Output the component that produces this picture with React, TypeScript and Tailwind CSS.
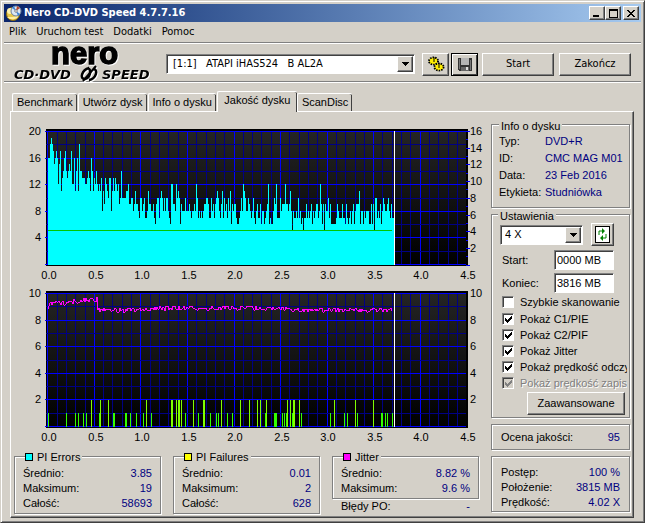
import React from "react";

const raised =
	"border border-white border-r-[#404040] border-b-[#404040] bg-[#d4d0c8] shadow-[inset_-1px_-1px_0_#808080]";
const sunken =
	"border border-[#808080] border-r-white border-b-white bg-white shadow-[inset_1px_1px_0_#404040]";
const groupBorder =
	"border border-[#808080] shadow-[1px_1px_0_#fff,inset_1px_1px_0_#fff]";

const pieErrors: number[] = [
	16, 16, 18, 19, 18, 17, 15, 16, 17, 16, 12, 15, 17, 11, 13, 14, 16, 17, 14, 13,
	14, 15, 14, 17, 12, 12, 16, 11, 14, 16, 11, 18, 14, 14, 13, 13, 13, 12, 12, 13,
	14, 13, 11, 16, 14, 11, 13, 12, 14, 12, 11, 12, 11, 13, 8, 11, 9, 13, 12, 11,
	10, 13, 13, 8, 11, 13, 11, 13, 12, 11, 12, 9, 10, 14, 10, 10, 10, 10, 11, 11,
	12, 9, 9, 10, 10, 8, 9, 11, 9, 9, 8, 7, 10, 10, 8, 9, 10, 7, 7, 8,
	11, 9, 9, 8, 8, 9, 7, 6, 9, 10, 10, 7, 10, 11, 10, 8, 10, 8, 10, 10,
	8, 7, 6, 12, 12, 9, 9, 8, 12, 10, 11, 10, 6, 9, 8, 8, 8, 10, 8, 8,
	8, 9, 8, 7, 8, 8, 9, 8, 12, 10, 7, 8, 7, 8, 7, 8, 9, 9, 10, 10,
	9, 7, 7, 10, 8, 9, 7, 9, 10, 11, 10, 8, 7, 9, 11, 7, 10, 8, 9, 7,
	10, 8, 11, 6, 9, 8, 9, 9, 7, 6, 6, 7, 8, 10, 8, 12, 11, 10, 8, 8,
	10, 9, 8, 7, 8, 10, 7, 6, 8, 9, 7, 7, 9, 6, 8, 8, 6, 7, 8, 9,
	12, 6, 7, 6, 6, 8, 10, 9, 12, 7, 7, 7, 10, 8, 9, 9, 9, 12, 9, 9,
	8, 9, 11, 8, 5, 8, 7, 7, 8, 7, 10, 7, 8, 6, 7, 5, 7, 7, 9, 7,
	8, 7, 8, 9, 6, 8, 7, 8, 9, 9, 7, 8, 12, 9, 6, 9, 5, 9, 8, 8,
	10, 7, 9, 6, 6, 6, 6, 6, 7, 9, 8, 7, 7, 7, 9, 7, 7, 6, 9, 7,
	6, 7, 8, 6, 8, 9, 6, 8, 9, 9, 9, 11, 6, 8, 8, 6, 8, 7, 8, 8,
	8, 6, 6, 9, 6, 9, 5, 10, 10, 7, 8, 7, 9, 6, 8, 10, 9, 8, 8, 9,
	10, 8, 7, 9, 7, 7,
];

// sample positions with one and with two failures
const pifOnes: number[] = [
	0, 18, 27, 30, 35, 38, 51, 65, 66, 77, 78, 82, 88, 95, 103, 137, 150, 162, 168,
	170, 179, 184, 217, 226, 227, 228, 234, 236, 238, 244, 253, 282, 296, 299, 309,
	333, 334, 337, 339, 344,
];
const pifTwos: number[] = [
	43, 52, 60, 98, 123, 124, 128, 130, 131, 133, 145, 155, 156, 173, 192, 201, 209,
	212, 218, 239, 242, 245, 246, 251, 286, 307, 325,
];

const jitterPoints = (): string => {
	let seed = 7;
	const points: string[] = [];
	for (let i = 0; i < 345; i++) {
		seed = (seed * 1103 + 12345) % 65536;
		let base = 8.72;
		if (i < 2) base = 8.85;
		else if (i < 50) base = 9.15 + i * 0.008;
		else if (i < 90) base = 8.7;
		else if (i < 130) base = 8.74 + (i - 90) * 0.004;
		else if (i < 240) base = 8.87;
		const value = base + (seed / 65536 - 0.5) * 0.36;
		points.push(`${36 + i},${Math.round(143 - value * 13.3)}`);
	}
	return points.join(" ");
};

interface ChartProps {
	left: string[];
	right: string[];
	rightStep: number;
	label: string;
	id: string;
	children: React.ReactNode;
}

const Chart: React.FC<ChartProps> = ({
	left,
	right,
	rightStep,
	label,
	id,
	children,
}) => (
	<svg
		viewBox="0 0 475 162"
		className="block w-full text-[11px]"
		shapeRendering="crispEdges"
		role="img"
		aria-label={label}>
		<defs>
			<linearGradient id={id} x1="0" y1="0" x2="0" y2="1">
				<stop offset="0" stopColor="#242424" />
				<stop offset="1" stopColor="#000" />
			</linearGradient>
		</defs>
		<rect x="34" y="8" width="422" height="137" fill="#000" />
		<rect x="36" y="11" width="418" height="132" fill={`url(#${id})`} />
		{Array.from({ length: 45 }, (_, i) => (
			<rect
				key={i}
				x={Math.round(35.3 + i * 9.31)}
				y="10"
				width="1"
				height="134"
				fill={i % 5 ? "#000084" : "#0000ff"}
			/>
		))}
		{Array.from({ length: 11 }, (_, i) => (
			<rect
				key={i}
				x={i % 2 ? 34 : 33}
				y={Math.round(10 + i * 13.3)}
				width={i % 2 ? 420 : 421}
				height="1"
				fill={i % 2 ? "#000084" : "#0000ff"}
			/>
		))}
		{children}
		<rect x="382" y="10" width="1" height="134" fill="#fff" />
		{left.map((text, i) => (
			<text key={text} x="29" y={14 + Math.round(i * 26.6)} textAnchor="end">
				{text}
			</text>
		))}
		{right.map((text, i) => (
			<text key={text} x="458" y={14 + Math.round(i * rightStep)}>
				{text}
			</text>
		))}
		{Array.from({ length: 10 }, (_, i) => (
			<text key={i} x={Math.round(37 + i * 46.5)} y="158" textAnchor="middle">
				{(i / 2).toFixed(1)}
			</text>
		))}
	</svg>
);

interface StatsProps {
	title: string;
	swatch: string;
	rows: [string, string][];
}

const Stats: React.FC<StatsProps> = ({ title, swatch, rows }) => (
	<section className={`${groupBorder} px-2 pb-0.5`}>
		<h2 className="-mt-[7px] ml-0.5 flex w-fit items-center gap-1 bg-[#d4d0c8] pr-0.5 leading-[14px]">
			<span className={`size-2 border border-black ${swatch}`} />
			{title}
		</h2>
		<dl className="mt-0.5 leading-[15px]">
			{rows.map(([name, value]) => (
				<div key={name} className="flex justify-between">
					<dt>{name}</dt>
					<dd className="text-[#000080]">{value}</dd>
				</div>
			))}
		</dl>
	</section>
);

const DropArrow: React.FC = () => (
	<span
		className={`${raised} pointer-events-none absolute top-0.5 right-0.5 bottom-0.5 flex w-4 items-center justify-center`}>
		<svg width="7" height="4" viewBox="0 0 7 4" shapeRendering="crispEdges">
			<path d="M0 0h7v1H6v1H5v1H4v1H3V3H2V2H1V1H0z" />
		</svg>
	</span>
);

interface CheckProps {
	text: string;
	checked?: boolean;
	disabled?: boolean;
}

const Check: React.FC<CheckProps> = ({ text, checked, disabled }) => (
	<label
		className={`flex h-4 items-center whitespace-nowrap ${
			disabled ? "text-[#808080] [text-shadow:1px_1px_0_#fff]" : ""
		}`}>
		<span className="relative mr-1.5 size-3 shrink-0">
			<input
				type="checkbox"
				defaultChecked={checked}
				disabled={disabled}
				className={`${sunken} peer block size-3 appearance-none disabled:bg-[#d4d0c8]`}
			/>
			<svg
				viewBox="0 0 12 12"
				shapeRendering="crispEdges"
				className="pointer-events-none absolute inset-0 hidden fill-current peer-checked:block">
				<path d="M3 5h1v1h1v1h1V6h1V5h1V4h1V3h1v3H9v1H8v1H7v1H6v1H5V9H4V8H3z" />
			</svg>
		</span>
		{text}
	</label>
);

const tabs: string[] = [
	"Benchmark",
	"Utwórz dysk",
	"Info o dysku",
	"Jakość dysku",
	"ScanDisc",
];

const App: React.FC = () => {
	return (
		<div className="flex min-h-screen flex-col border border-[#d4d0c8] border-r-[#404040] border-b-[#404040] bg-[#d4d0c8] font-['Liberation_Sans',Arial,sans-serif] text-[11px] text-black shadow-[inset_1px_1px_0_#fff,inset_-1px_-1px_0_#808080]">
			<header className="mx-[3px] mt-[3px] flex h-[18px] items-center bg-linear-to-r from-[#0a246a] to-[#a6caf0] pr-0.5 pl-0.5 font-['DejaVu_Sans_Condensed','DejaVu_Sans',sans-serif]">
				<svg width="16" height="16" viewBox="0 0 16 16" aria-hidden="true">
					<circle cx="7" cy="9" r="6.5" fill="#e8c84c" stroke="#8c6a10" />
					<circle cx="4" cy="6" r="3" fill="#fff3b0" />
					<path d="M1 12q4 4 10 1l2-3-6 2z" fill="#fff0a0" />
					<circle cx="10" cy="6" r="5" fill="#dce8f4" stroke="#6a7f9c" />
					<path d="M10 6 6 3l2-2zM10 6l4 3-2 2z" fill="#3f86d8" />
					<path d="m10 6 1-5 3 2z" fill="#b84830" />
					<circle cx="10" cy="6" r="1.3" fill="#fff" stroke="#444" strokeWidth=".6" />
				</svg>
				<h1 className="ml-0.5 flex-1 font-bold text-white">
					Nero CD-DVD Speed 4.7.7.16
				</h1>
				<button
					aria-label="Minimize"
					className={`${raised} flex h-3.5 w-4 items-end justify-center pb-0.5`}>
					<span className="mr-0.5 h-0.5 w-1.5 bg-black" />
				</button>
				<button
					aria-label="Maximize"
					className={`${raised} flex h-3.5 w-4 items-center justify-center`}>
					<span className="h-[9px] w-[9px] border border-t-2 border-black" />
				</button>
				<button
					aria-label="Close"
					className={`${raised} ml-0.5 flex h-3.5 w-4 items-center justify-center`}>
					<svg width="8" height="7" viewBox="0 0 8 7" shapeRendering="crispEdges">
						<path d="M0 0h2v1h1v1h2V1h1V0h2v1H7v1H6v1H5v1h1v1h1v1h1v1H6V6H5V5H3v1H2v1H0V6h1V5h1V4h1V3H2V2H1V1H0z" />
					</svg>
				</button>
			</header>

			<nav className="mx-[3px] flex h-[21px] items-center gap-2.5 border-b border-[#808080] pl-[5px] font-['DejaVu_Sans_Condensed','DejaVu_Sans',sans-serif] shadow-[0_1px_0_#fff]">
				<button>Plik</button>
				<button>Uruchom test</button>
				<button>Dodatki</button>
				<button>Pomoc</button>
			</nav>

			<div className="mx-[3px] flex h-[39px] items-center border-b border-[#808080] pt-1 pr-2.5 pl-2 font-['DejaVu_Sans_Condensed','DejaVu_Sans',sans-serif] shadow-[0_1px_0_#fff]">
				<svg
					width="148"
					height="36"
					viewBox="0 0 148 36"
					role="img"
					aria-label="nero CD-DVD Speed"
					className="mr-1.5 shrink-0 overflow-visible drop-shadow-[1px_1px_0_#fff]">
					<text
						x="39"
						y="18"
						stroke="#000"
						strokeWidth="1.5"
						className="font-['Liberation_Sans',sans-serif] text-[31px] font-bold">
						nero
					</text>
					<g className="font-['DejaVu_Sans',sans-serif] text-[13px] font-bold italic">
						<text x="2" y="33">
							CD·DVD
						</text>
						<text x="90" y="33">
							SPEED
						</text>
					</g>
					<g fill="none" stroke="#000">
						<path
							d="M77 22c-7 2-10 11-4 11 5-1 7-9 3-11zM81 23c6 0 3 10-4 11"
							strokeWidth="2.5"
						/>
						<path d="m84 20-13 15" strokeWidth="2" />
					</g>
				</svg>
				<div className="relative flex-1">
					<select
						aria-label="Napęd"
						className={`${sunken} block h-5 w-full appearance-none pl-1.5 whitespace-pre`}>
						<option>{"[1:1]\u00a0\u00a0 ATAPI iHAS524\u00a0\u00a0 B AL2A"}</option>
					</select>
					<DropArrow />
				</div>
				<button
					aria-label="Opcje"
					className={`${raised} ml-[7px] flex h-[23px] w-[27px] items-center justify-center`}>
					<svg width="18" height="18" viewBox="0 0 18 18" stroke="#000">
						<ellipse cx="6.500" cy="6" rx="4.500" ry="3.500" fill="#fe0" strokeWidth="2" strokeDasharray="1.500 1" />
						<ellipse cx="12" cy="12" rx="4.500" ry="3.500" fill="#fe0" strokeWidth="2" strokeDasharray="1.500 1" />
						<ellipse cx="6.500" cy="6" rx="3.500" ry="2.500" fill="#fe0" stroke="none" />
						<ellipse cx="12" cy="12" rx="3.500" ry="2.500" fill="#fe0" stroke="none" />
						<path d="M7 2v5M12 8v5" fill="none" />
					</svg>
				</button>
				<button
					aria-label="Zapisz"
					className="ml-0.5 flex h-[23px] w-[27px] items-center justify-center border border-black bg-[#d4d0c8] shadow-[inset_1px_1px_0_#fff,inset_-1px_-1px_0_#404040]">
					<svg width="14" height="13" viewBox="0 0 14 13" shapeRendering="crispEdges">
						<path d="M0 0h14v13H1l-1-1z" fill="#333" />
						<path d="M1 1h1v10H1zM12 2h1v10h-1z" fill="#777" />
						<path d="M3 0h8v7H3z" fill="#b4b4b4" />
						<path d="M3 9h8v4H3z" fill="#666" />
						<path d="M8 9h2v3H8z" fill="#ddd" />
					</svg>
				</button>
				<button className={`${raised} ml-1 h-[23px] w-[72px]`}>Start</button>
				<button className={`${raised} ml-[5px] h-[23px] w-[72px]`}>
					Zakończ
				</button>
			</div>

			<main className="mr-2.5 mb-1 ml-[9px] flex flex-1 flex-col pt-[9px]">
				<div role="tablist" className="flex items-end pl-0.5">
					{tabs.map((tab) => (
						<button
							key={tab}
							role="tab"
							aria-selected={tab === "Jakość dysku"}
							className={
								tab === "Jakość dysku"
									? "relative z-10 -mb-px h-[21px] w-20 rounded-t-xs border-t border-l border-white bg-[#d4d0c8] pb-1 shadow-[inset_-1px_0_0_#404040]"
									: "mr-px h-[18px] rounded-t-xs border-t border-l border-white px-1 shadow-[inset_-1px_0_0_#404040]"
							}>
							{tab}
						</button>
					))}
				</div>

				<div className="flex flex-1 border border-white border-r-[#404040] border-b-[#404040] pl-px shadow-[inset_-1px_-1px_0_#808080]">
					<div className="min-w-0 flex-1 pt-[9px]">
						<Chart
							id="pie"
							label="PI Errors"
							left={["20", "16", "12", "8", "4"]}
							right={["16", "14", "12", "10", "8", "6", "4", "2"]}
							rightStep={16.7}>
							{pieErrors.map((value, i) => (
								<rect
									key={i}
									x={36 + i}
									y={Math.round(143.5 - value * 6.67)}
									width="1"
									height={144 - Math.round(143.5 - value * 6.67)}
									fill="#00ffff"
								/>
							))}
							<rect x="36" y="109" width="344" height="1" fill="#00c800" />
							{Array.from({ length: 17 }, (_, i) => (
								<rect
									key={i}
									x="454"
									y={Math.round(10 + i * 8.35)}
									width={i % 2 ? 2 : 4}
									height="1"
									fill="#0000ff"
								/>
							))}
						</Chart>
						<Chart
							id="pif"
							label="PI Failures / Jitter"
							left={["10", "8", "6", "4", "2"]}
							right={["10", "8", "6", "4", "2"]}
							rightStep={26.6}>
							{pifOnes.map((x) => (
								<rect key={x} x={36 + x} y="130" width="1" height="14" fill="#33ff00" />
							))}
							{pifTwos.map((x) => (
								<rect key={x} x={36 + x} y="117" width="1" height="27" fill="#80ff00" />
							))}
							<polyline points={jitterPoints()} fill="none" stroke="#ff00ff" />
						</Chart>

						<div className="mt-[11px] grid grid-cols-3 items-start gap-3 pr-2 pl-0.5">
							<Stats
								title="PI Errors"
								swatch="bg-[#00ffff]"
								rows={[
									["Średnio:", "3.85"],
									["Maksimum:", "19"],
									["Całość:", "58693"],
								]}
							/>
							<Stats
								title="PI Failures"
								swatch="bg-[#ffff00]"
								rows={[
									["Średnio:", "0.01"],
									["Maksimum:", "2"],
									["Całość:", "628"],
								]}
							/>
							<div>
								<Stats
									title="Jitter"
									swatch="bg-[#ff00ff]"
									rows={[
										["Średnio:", "8.82 %"],
										["Maksimum:", "9.6 %"],
									]}
								/>
								<p className="flex justify-between px-[9px] leading-[15px]">
									<span>Błędy PO:</span>
									<span className="text-[#000080]">-</span>
								</p>
							</div>
						</div>
					</div>

					<aside className="mt-3 mr-[3px] ml-1 flex w-[139px] shrink-0 flex-col gap-1.5">
						<section className={`${groupBorder} pb-1.5 pl-[7px]`}>
							<h2 className="-mt-1.5 w-fit bg-[#d4d0c8] px-0.5 leading-[14px]">
								Info o dysku
							</h2>
							<dl className="grid grid-cols-[46px_1fr] leading-[17px] whitespace-nowrap">
								<dt>Typ:</dt>
								<dd className="text-[#000080]">DVD+R</dd>
								<dt>ID:</dt>
								<dd className="text-[#000080]">CMC MAG M01</dd>
								<dt>Data:</dt>
								<dd className="text-[#000080]">23 Feb 2016</dd>
								<dt>Etykieta:</dt>
								<dd className="text-[#000080]">Studniówka</dd>
							</dl>
						</section>

						<section className={`${groupBorder} pb-0.5`}>
							<h2 className="-mt-1.5 ml-1.5 w-fit bg-[#d4d0c8] px-0.5 leading-[14px]">
								Ustawienia
							</h2>
							<div className="flex items-center gap-2 pl-2">
								<div className="relative w-[83px]">
									<select
										aria-label="Prędkość"
										className={`${sunken} block h-5 w-full appearance-none pl-1`}>
										<option>4 X</option>
									</select>
									<DropArrow />
								</div>
								<button
									aria-label="Odśwież"
									className={`${raised} flex size-[23px] items-center justify-center`}>
									<svg width="15" height="17" viewBox="0 0 15 17" fill="none">
										<rect x=".5" y=".5" width="14" height="16" fill="#fff" stroke="#000" />
										<path d="M4 9V5h3M11 8v4H8" stroke="#008000" />
										<path d="m7 2 3 3-3 3zM8 9l-3 3 3 3z" fill="#008000" />
									</svg>
								</button>
							</div>
							<div className="mt-1 flex flex-col gap-[3px] pr-[15px] pl-2.5">
								<label className="flex items-center justify-between">
									Start:
									<input
										defaultValue="0000 MB"
										className={`${sunken} h-5 w-[60px] px-0.5`}
									/>
								</label>
								<label className="flex items-center justify-between">
									Koniec:
									<input
										defaultValue="3816 MB"
										className={`${sunken} h-5 w-[60px] px-0.5`}
									/>
								</label>
							</div>
							<div className="mr-0.5 overflow-hidden pt-px pl-2.5">
								<Check text="Szybkie skanowanie" />
								<div className="pt-px">
									<Check text="Pokaż C1/PIE" checked />
									<Check text="Pokaż C2/PIF" checked />
									<Check text="Pokaż Jitter" checked />
									<Check text="Pokaż prędkość odczytu" checked />
									<Check text="Pokaż prędkość zapisu" checked disabled />
								</div>
							</div>
							<button
								className={`${raised} mt-px mr-1 ml-auto block h-[23px] w-[98px]`}>
								Zaawansowane
							</button>
						</section>

						<section className={`${groupBorder} flex h-[26px] items-center justify-between px-[9px]`}>
							<h2>Ocena jakości:</h2>
							<span className="text-[#000080]">95</span>
						</section>

						<dl className={`${groupBorder} px-[9px] pt-2 pb-px leading-[15px]`}>
							<div className="flex justify-between">
								<dt>Postęp:</dt>
								<dd className="text-[#000080]">100 %</dd>
							</div>
							<div className="flex justify-between">
								<dt>Położenie:</dt>
								<dd className="text-[#000080]">3815 MB</dd>
							</div>
							<div className="flex justify-between">
								<dt>Prędkość:</dt>
								<dd className="text-[#000080]">4.02 X</dd>
							</div>
						</dl>
					</aside>
				</div>
			</main>
		</div>
	);
};

export default App;
